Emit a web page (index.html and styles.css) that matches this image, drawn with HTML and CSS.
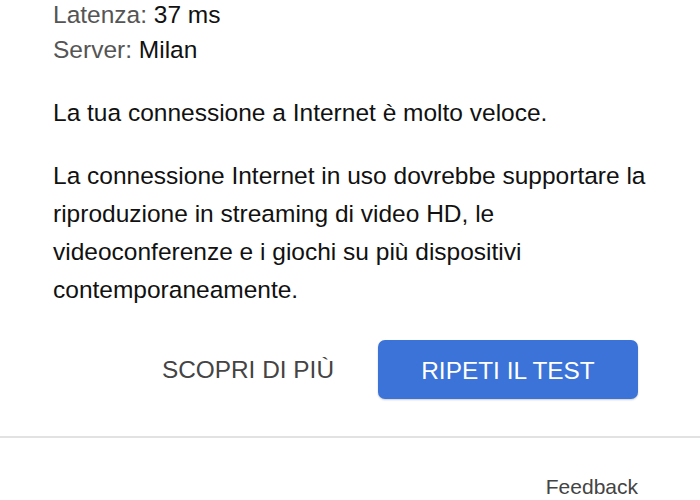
FILE: index.html
```html
<!DOCTYPE html>
<html lang="it">
<head>
<meta charset="utf-8">
<link rel="stylesheet" href="styles.css">
</head>
<body>
<div class="card">
  <div class="content">
    <div class="stats">
      <div class="stat"><span class="label">Latenza:</span> 37 ms</div>
      <div class="stat"><span class="label">Server:</span> Milan</div>
    </div>
    <p class="summary">La tua connessione a Internet è molto veloce.</p>
    <p class="detail">La connessione Internet in uso dovrebbe supportare la riproduzione in streaming di video HD, le videoconferenze e i giochi su più dispositivi contemporaneamente.</p>
    <div class="actions">
      <button class="btn btn-text">SCOPRI DI PIÙ</button>
      <button class="btn btn-primary">RIPETI IL TEST</button>
    </div>
  </div>
  <div class="footer">
    <span class="feedback">Feedback</span>
  </div>
</div>
</body>
</html>
```

FILE: styles.css
```css
html, body {
  margin: 0;
  padding: 0;
  background: #fff;
}
body {
  font-family: "Liberation Sans", Arial, sans-serif;
  color: #111;
  overflow: hidden;
}
.card {
  width: 700px;
}
.content {
  padding: 0 47px 0 53px;
  margin-top: -3px;
}
.stats {
  font-size: 24.5px;
  line-height: 35px;
}
.label {
  color: #555;
}
.summary {
  margin: 27px 0 0;
  font-size: 24.5px;
  line-height: 38px;
}
.detail {
  margin: 25px 0 0;
  font-size: 24.5px;
  line-height: 38px;
}
.actions {
  display: flex;
  justify-content: flex-end;
  align-items: center;
  gap: 44px;
  margin-top: 31px;
  padding-right: 15px;
}
.btn {
  font-family: "Liberation Sans", Arial, sans-serif;
  font-size: 24.4px;
  border: none;
  background: none;
  padding: 0;
  cursor: pointer;
}
.btn-text {
  color: #444;
}
.btn-primary {
  width: 260px;
  height: 59px;
  border-radius: 7px;
  background: #3b73d9;
  color: #fff;
  padding-top: 2px;
  box-shadow: 0 1px 2px rgba(0,0,0,0.2);
}
.footer {
  margin-top: 37px;
  border-top: 2px solid #e2e2e2;
  display: flex;
  justify-content: flex-end;
  padding: 37px 62px 0 0;
}
.feedback {
  font-size: 21px;
  color: #444;
  line-height: 24px;
}
```
